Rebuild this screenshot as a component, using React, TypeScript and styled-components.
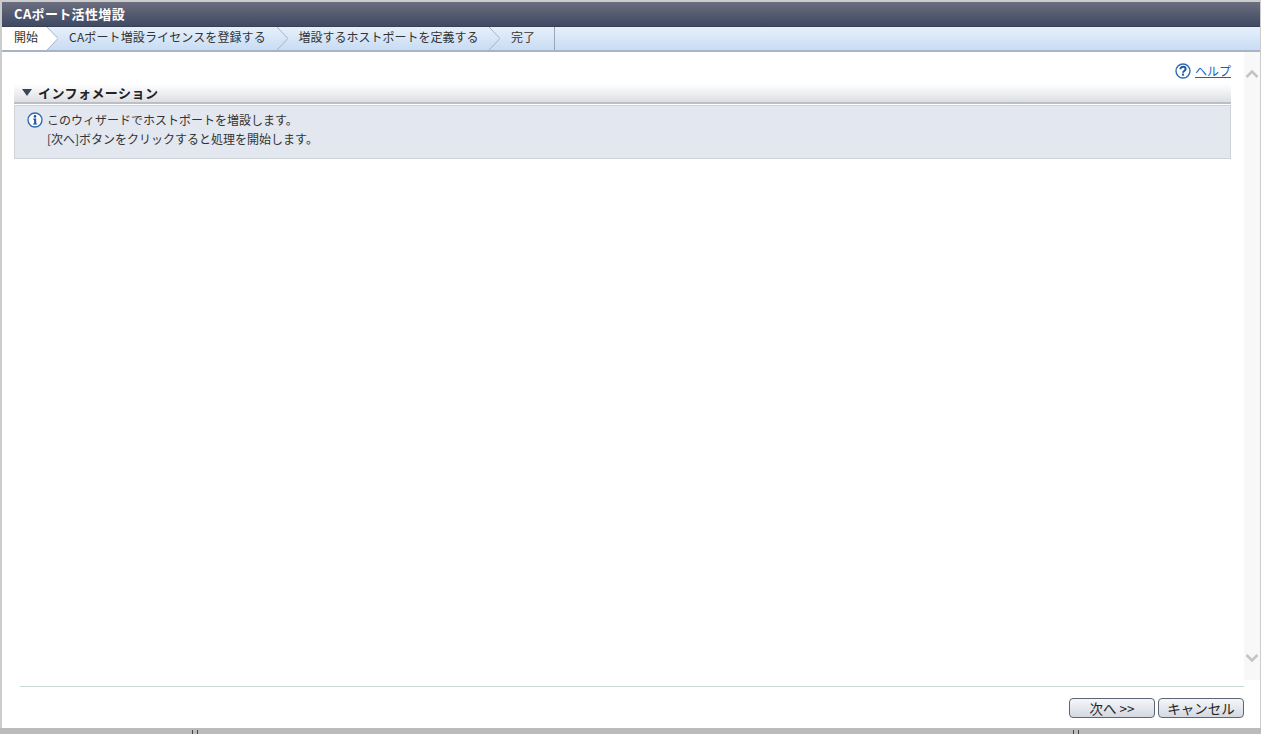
import styled, {createGlobalStyle} from "styled-components";

const GlobalStyle = createGlobalStyle`
  html, body {
    margin: 0;
    height: 100%;
    overflow: hidden;
    background: #cccccc;
  }

  body {
    font-family: "Noto Sans CJK JP", "Liberation Sans", sans-serif;
    font-size: 12px;
    color: #333333;
  }
`

const Page = styled.div`
  width: 1261px;
  height: 734px;
  display: flex;
  flex-direction: column;
  box-sizing: border-box;
  padding: 2px 1px 0 2px;
  background: #cccccc;
`

const TitleBar = styled.div`
  height: 25px;
  flex: none;
  box-sizing: border-box;
  padding: 0 0 1px 12px;
  display: flex;
  align-items: center;
  font-size: 13px;
  font-weight: bold;
  letter-spacing: 0.35px;
  color: #ffffff;
  background: linear-gradient(#6b6f80, #555a6e 50%, #3f4a66);
  border-bottom: 1px solid #39404f;
`

const StepBar = styled.div`
  height: 25px;
  flex: none;
  box-sizing: border-box;
  display: flex;
  align-items: stretch;
  background: linear-gradient(#e6f0fb, #c8dcf4);
  border-bottom: 2px solid #a9b3c6;
`

const Step = styled.div<{ $active?: boolean; $width: number; $last?: boolean; $spacing?: number }>`
  width: ${p => p.$width}px;
  flex: none;
  box-sizing: border-box;
  padding-left: ${p => (p.$active ? 12 : 0)}px;
  padding-right: ${p => (p.$last ? 8 : 0)}px;
  text-align: ${p => (p.$active ? "left" : "center")};
  line-height: 20px;
  letter-spacing: ${p => p.$spacing ?? 0}px;
  background: ${p => (p.$active ? "#ffffff" : "transparent")};
  border-right: ${p => (p.$last ? "1px solid #9aa5b8" : "none")};
`

const StepArrow = styled.svg`
  width: 11px;
  height: 23px;
  flex: none;
  display: block;
`

const Body = styled.div`
  flex: 1;
  min-height: 0;
  display: flex;
  flex-direction: column;
  background: #ffffff;
`

const Middle = styled.div`
  flex: 1;
  min-height: 0;
  display: flex;
`

const Content = styled.div`
  flex: 1;
  min-width: 0;
  box-sizing: border-box;
  padding: 11px 13px 0 12px;
`

const HelpRow = styled.div`
  height: 21px;
  display: flex;
  justify-content: flex-end;
  align-items: flex-start;
  gap: 4px;
`

const HelpLink = styled.a`
  color: #1a5fc0;
  text-decoration: underline;
  line-height: 16px;
  cursor: pointer;
`

const SectionHeader = styled.div`
  height: 20px;
  box-sizing: border-box;
  display: flex;
  align-items: center;
  gap: 6px;
  padding: 0 0 2px 8px;
  font-weight: bold;
  font-size: 13px;
  letter-spacing: 0.45px;
  color: #222222;
  background: linear-gradient(#ffffff, #dcdfe3);
  border-bottom: 2px solid #b9bec8;
`

const Triangle = styled.span`
  width: 0;
  height: 0;
  border-left: 5px solid transparent;
  border-right: 5px solid transparent;
  border-top: 7px solid #3c4660;
`

const InfoBox = styled.div`
  height: 54px;
  margin-top: 1px;
  box-sizing: border-box;
  display: flex;
  gap: 4px;
  padding: 4px 0 0 12px;
  background: #e3e7ef;
  border: 1px solid #cfd2d6;
`

const InfoText = styled.div`
  line-height: 19px;
`

const RoundIcon = styled.svg<{ $offset?: number }>`
  width: 16px;
  height: 16px;
  flex: none;
  display: block;
  margin-top: ${p => p.$offset ?? 0}px;
`

const ScrollTrack = styled.div`
  width: 16px;
  flex: none;
  display: flex;
  flex-direction: column;
  justify-content: space-between;
  align-items: center;
  padding: 17px 0;
  background: #f8f8f8;
`

const Chevron = styled.svg`
  width: 14px;
  height: 10px;
  display: block;
`

const Footer = styled.div`
  height: 42px;
  flex: none;
  box-sizing: border-box;
  margin: 6px 16px 0 18px;
  padding-top: 11px;
  display: flex;
  justify-content: flex-end;
  gap: 3px;
  border-top: 1px solid #ccd8d8;
`

const Button = styled.button`
  width: 86px;
  height: 20px;
  box-sizing: border-box;
  padding: 0;
  font-family: inherit;
  font-size: 13.5px;
  line-height: 16px;
  color: #222222;
  background: linear-gradient(#f6f7f9, #d3d8e2);
  border: 1px solid #5d6675;
  border-radius: 4px;
`

const BottomStrip = styled.div`
  height: 6px;
  flex: none;
  margin-left: -2px;
  margin-right: -1px;
  display: flex;
  align-items: flex-end;
  background: #bbbbbb;
`

const Grip = styled.span<{ $left: number }>`
  width: 6px;
  height: 4px;
  margin-left: ${p => p.$left}px;
  box-sizing: border-box;
  border-left: 1px solid #3f4450;
  border-right: 1px solid #3f4450;
`

const InfoIcon = () => (
  <RoundIcon viewBox="0 0 16 16" $offset={2}>
    <circle cx="8" cy="8" r="7" fill="#ffffff" stroke="#2f6cb5" strokeWidth="1.4"/>
    <circle cx="8" cy="4.4" r="1.3" fill="#1f5aa6"/>
    <path d="M6.2 6.6h3v4.8h1v1.2H6v-1.2h1.1V7.8h-.9z" fill="#1f5aa6"/>
  </RoundIcon>
)

const HelpIcon = () => (
  <RoundIcon viewBox="0 0 16 16">
    <circle cx="8" cy="8" r="7" fill="#ffffff" stroke="#2f6cb5" strokeWidth="1.4"/>
    <path d="M5.4 6.2C5.4 4.7 6.6 3.8 8 3.8s2.6.9 2.6 2.3c0 1.9-2.6 1.9-2.6 3.6" fill="none" stroke="#1f5aa6" strokeWidth="2"/>
    <rect x="7" y="10.6" width="2" height="2" fill="#1f5aa6"/>
  </RoundIcon>
)

const Arrow = ({first}: { first?: boolean }) => (
  <StepArrow viewBox="0 0 11 23">
    {first && <path d="M0 0L11 11.5L0 23z" fill="#ffffff"/>}
    <path d="M0 0L11 11.5L0 23" fill="none" stroke="#a6b2c4" strokeWidth="1"/>
  </StepArrow>
)

export default function App() {
  return (
    <Page>
      <GlobalStyle/>
      <TitleBar>CAポート活性増設</TitleBar>
      <StepBar>
        <Step $active $width={45}>開始</Step>
        <Arrow first/>
        <Step $width={219} $spacing={0.12}>CAポート増設ライセンスを登録する</Step>
        <Arrow/>
        <Step $width={201}>増設するホストポートを定義する</Step>
        <Arrow/>
        <Step $width={55} $last>完了</Step>
      </StepBar>
      <Body>
        <Middle>
          <Content>
            <HelpRow>
              <HelpIcon/>
              <HelpLink>ヘルプ</HelpLink>
            </HelpRow>
            <SectionHeader>
              <Triangle/>
              インフォメーション
            </SectionHeader>
            <InfoBox>
              <InfoIcon/>
              <InfoText>
                このウィザードでホストポートを増設します。<br/>
                [次へ]ボタンをクリックすると処理を開始します。
              </InfoText>
            </InfoBox>
          </Content>
          <ScrollTrack>
            <Chevron viewBox="0 0 14 10">
              <path d="M1.5 8L7 2.5L12.5 8" fill="none" stroke="#c4c4c4" strokeWidth="2.6"/>
            </Chevron>
            <Chevron viewBox="0 0 14 10">
              <path d="M1.5 2L7 7.5L12.5 2" fill="none" stroke="#c4c4c4" strokeWidth="2.6"/>
            </Chevron>
          </ScrollTrack>
        </Middle>
        <Footer>
          <Button>次へ &gt;&gt;</Button>
          <Button>キャンセル</Button>
        </Footer>
        <BottomStrip>
          <Grip $left={192}/>
          <Grip $left={875}/>
        </BottomStrip>
      </Body>
    </Page>
  );
}
